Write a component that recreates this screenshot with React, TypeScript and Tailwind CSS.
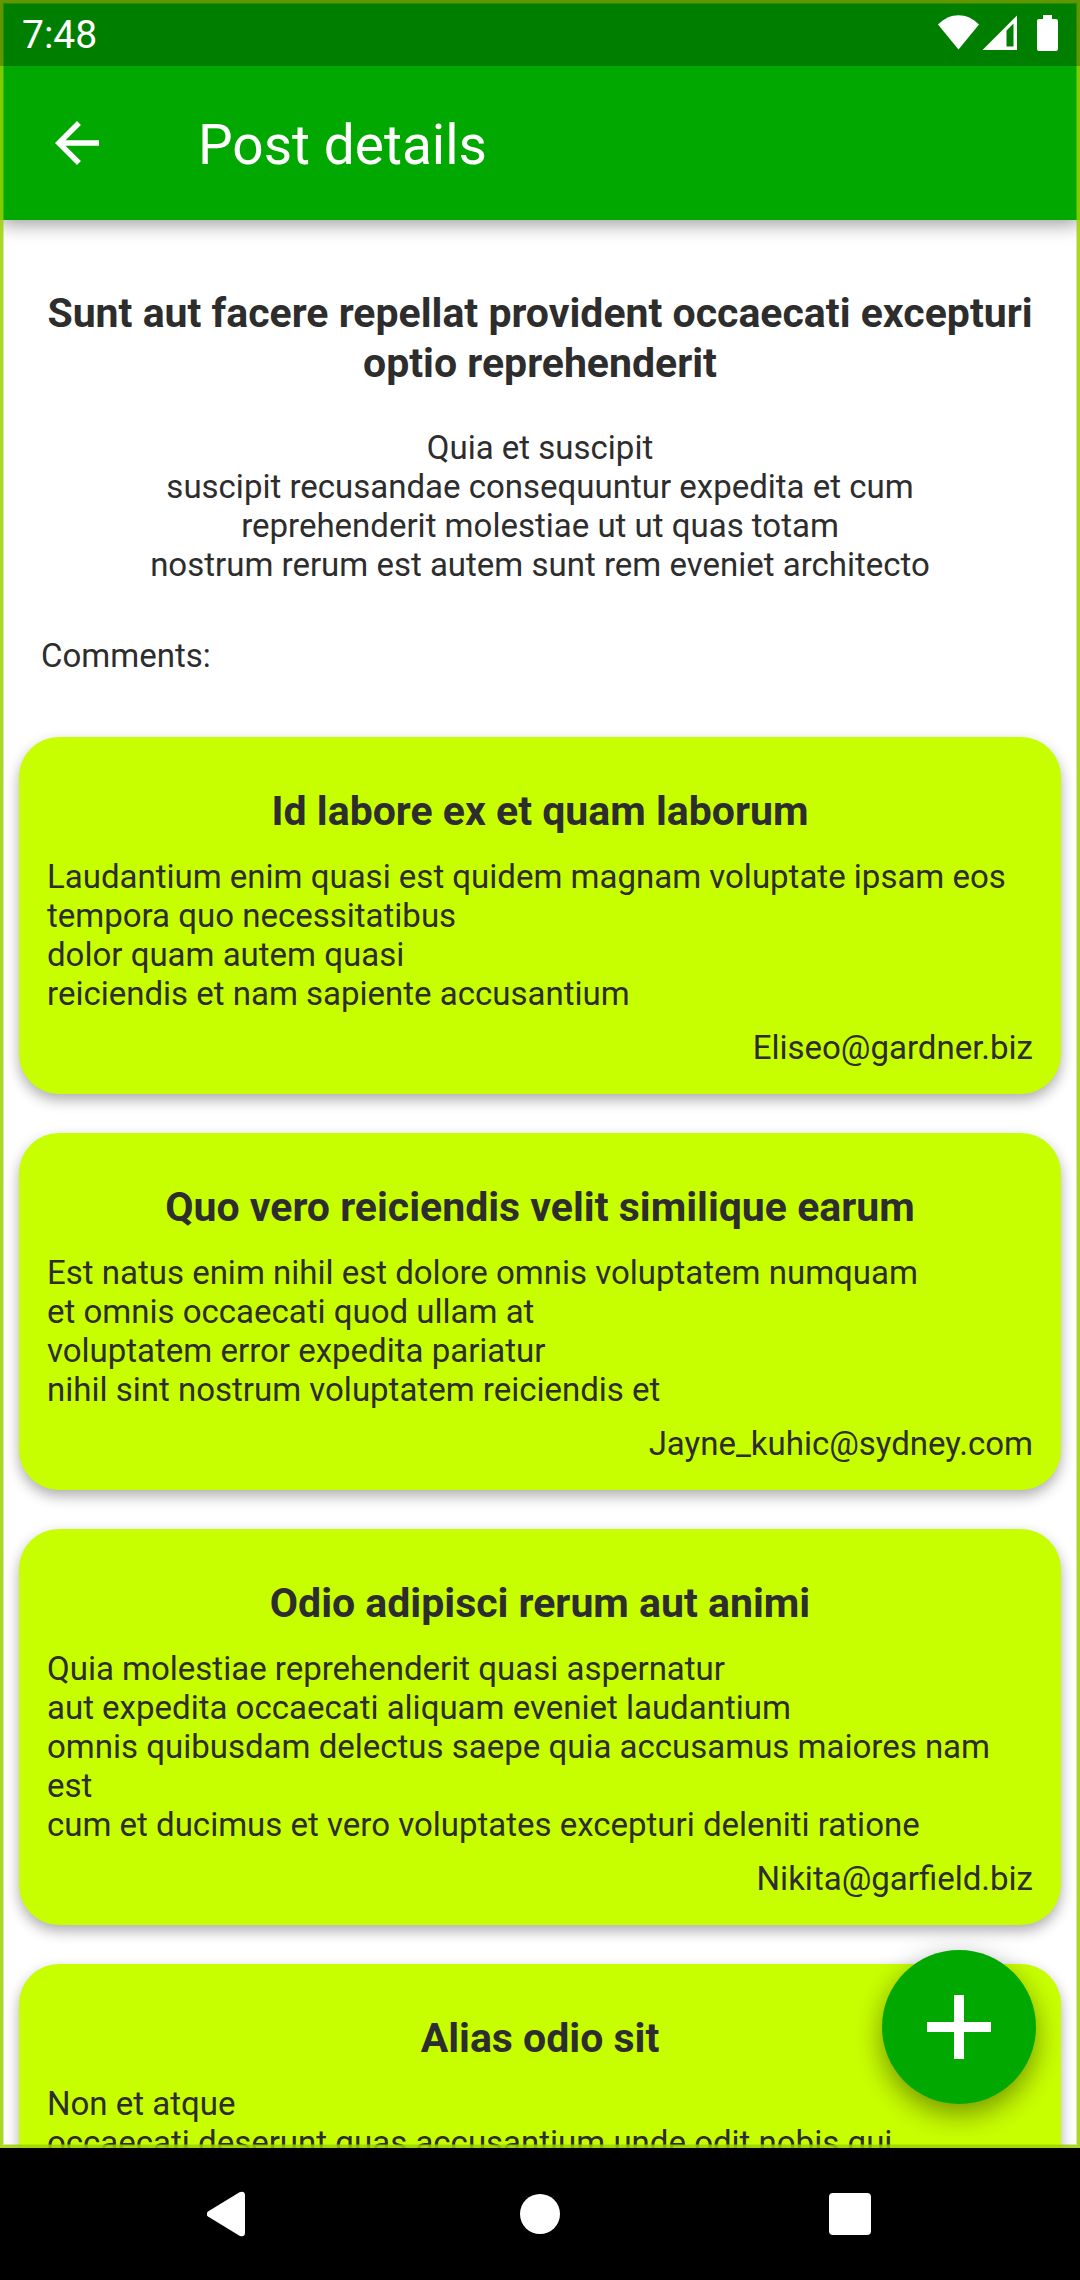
type Comment = { title: string; body: string; email: string };

const comments: Comment[] = [
  {
    title: "Id labore ex et quam laborum",
    body: "Laudantium enim quasi est quidem magnam voluptate ipsam eos tempora quo necessitatibus\ndolor quam autem quasi\nreiciendis et nam sapiente accusantium",
    email: "Eliseo@gardner.biz",
  },
  {
    title: "Quo vero reiciendis velit similique earum",
    body: "Est natus enim nihil est dolore omnis voluptatem numquam\net omnis occaecati quod ullam at\nvoluptatem error expedita pariatur\nnihil sint nostrum voluptatem reiciendis et",
    email: "Jayne_kuhic@sydney.com",
  },
  {
    title: "Odio adipisci rerum aut animi",
    body: "Quia molestiae reprehenderit quasi aspernatur\naut expedita occaecati aliquam eveniet laudantium\nomnis quibusdam delectus saepe quia accusamus maiores nam est\ncum et ducimus et vero voluptates excepturi deleniti ratione",
    email: "Nikita@garfield.biz",
  },
  {
    title: "Alias odio sit",
    body: "Non et atque\noccaecati deserunt quas accusantium unde odit nobis qui",
    email: "Lew@alysha.tv",
  },
];

function StatusBar() {
  return (
    <div className="relative z-30 flex h-[66px] items-center justify-between bg-black/25 px-[22px] text-white">
      <span className="pt-1 text-[39px] leading-[46px]">7:48</span>
      <svg className="h-9 w-[120px]" viewBox="0 0 120 36" fill="currentColor" aria-hidden="true">
        <path d="M0 9.5 C12 -3 29 -3 41 9.5 L20.5 34.5 Z" />
        <path fillRule="evenodd" d="M79 0.5 V35 H44.5 Z M75.5 8.5 L68.5 15.5 V31.5 H75.5 Z" />
        <path d="M105 0 h9 v4 h4 a2 2 0 0 1 2 2 v28 a2 2 0 0 1 -2 2 h-17 a2 2 0 0 1 -2 -2 v-28 a2 2 0 0 1 2 -2 h4 z" />
      </svg>
    </div>
  );
}

function AppBar() {
  return (
    <header className="flex h-[154px] items-center gap-[88px] pl-11 text-white">
      <button type="button" aria-label="Back">
        <svg className="size-[66px]" viewBox="0 0 24 24" fill="currentColor" aria-hidden="true">
          <path d="M20 11H7.83l5.59-5.59L12 4l-8 8 8 8 1.41-1.41L7.83 13H20v-2z" />
        </svg>
      </button>
      <span className="pt-1 text-[55px] leading-16">Post details</span>
    </header>
  );
}

function CommentCard({ comment }: { comment: Comment }) {
  return (
    <li className="rounded-[40px] bg-[#c8ff00] px-7 pt-[49px] pb-[27px] shadow-[0_6px_14px_rgba(0,0,0,0.32)]">
      <h2 className="text-center text-[41px] leading-[50px] font-bold">{comment.title}</h2>
      <p className="mt-[21px] whitespace-pre-line">{comment.body}</p>
      <p className="mt-[15px] text-right">{comment.email}</p>
    </li>
  );
}

function NavBar() {
  return (
    <nav className="flex h-[132px] shrink-0 justify-center bg-black text-white">
      <button type="button" aria-label="Back" className="flex w-[310px] items-center justify-center">
        <svg className="size-[46px]" viewBox="0 0 46 46" fill="currentColor" aria-hidden="true">
          <path d="M1 20.5 L32.5 1.3 Q37.5 -0.5 38 4 V42 Q37.5 46.5 32.5 44.7 L1 25.5 Q-2 23 1 20.5 Z" />
        </svg>
      </button>
      <button type="button" aria-label="Home" className="flex w-[310px] items-center justify-center">
        <span className="size-10 rounded-full bg-white" />
      </button>
      <button type="button" aria-label="Recent apps" className="flex w-[310px] items-center justify-center">
        <span className="size-[42px] rounded bg-white" />
      </button>
    </nav>
  );
}

export default function App() {
  return (
    <div className="flex h-screen flex-col overflow-hidden bg-white font-['Roboto',sans-serif] text-[33px] leading-[39px] text-[#2d2d2d]">
      <div className="relative flex min-h-0 flex-1 flex-col overflow-hidden">
        <div className="relative shrink-0 bg-[#00a800] shadow-[0_4px_18px_rgba(0,0,0,0.4)]">
          <StatusBar />
          <AppBar />
        </div>
        <main className="min-h-0 flex-1 overflow-hidden px-[19px] pt-[68px]">
          <article className="px-[22px] text-center">
            <h1 className="text-[41px] leading-[50px] font-bold">
              Sunt aut facere repellat provident occaecati excepturi optio reprehenderit
            </h1>
            <p className="mt-10 whitespace-pre-line">
              {"Quia et suscipit\nsuscipit recusandae consequuntur expedita et cum\nreprehenderit molestiae ut ut quas totam\nnostrum rerum est autem sunt rem eveniet architecto"}
            </p>
          </article>
          <p className="mt-[52px] px-[22px]">Comments:</p>
          <ul className="mt-[62px] flex flex-col gap-[39px]">
            {comments.map((comment) => (
              <CommentCard key={comment.email} comment={comment} />
            ))}
          </ul>
        </main>
        <button
          type="button"
          aria-label="Add comment"
          className="absolute right-11 bottom-11 flex size-[154px] items-center justify-center rounded-full bg-[#00a800] text-white shadow-[0_10px_28px_rgba(0,0,0,0.42)]"
        >
          <svg className="size-16" viewBox="0 0 64 64" fill="currentColor" aria-hidden="true">
            <path d="M27 0h10v27h27v10H37v27H27V37H0V27h27z" />
          </svg>
        </button>
        <div className="pointer-events-none absolute inset-0 z-20 border-3 border-[rgba(152,208,0,0.84)]">
          <div className="size-full border border-[rgba(152,208,0,0.4)]" />
        </div>
      </div>
      <NavBar />
    </div>
  );
}
